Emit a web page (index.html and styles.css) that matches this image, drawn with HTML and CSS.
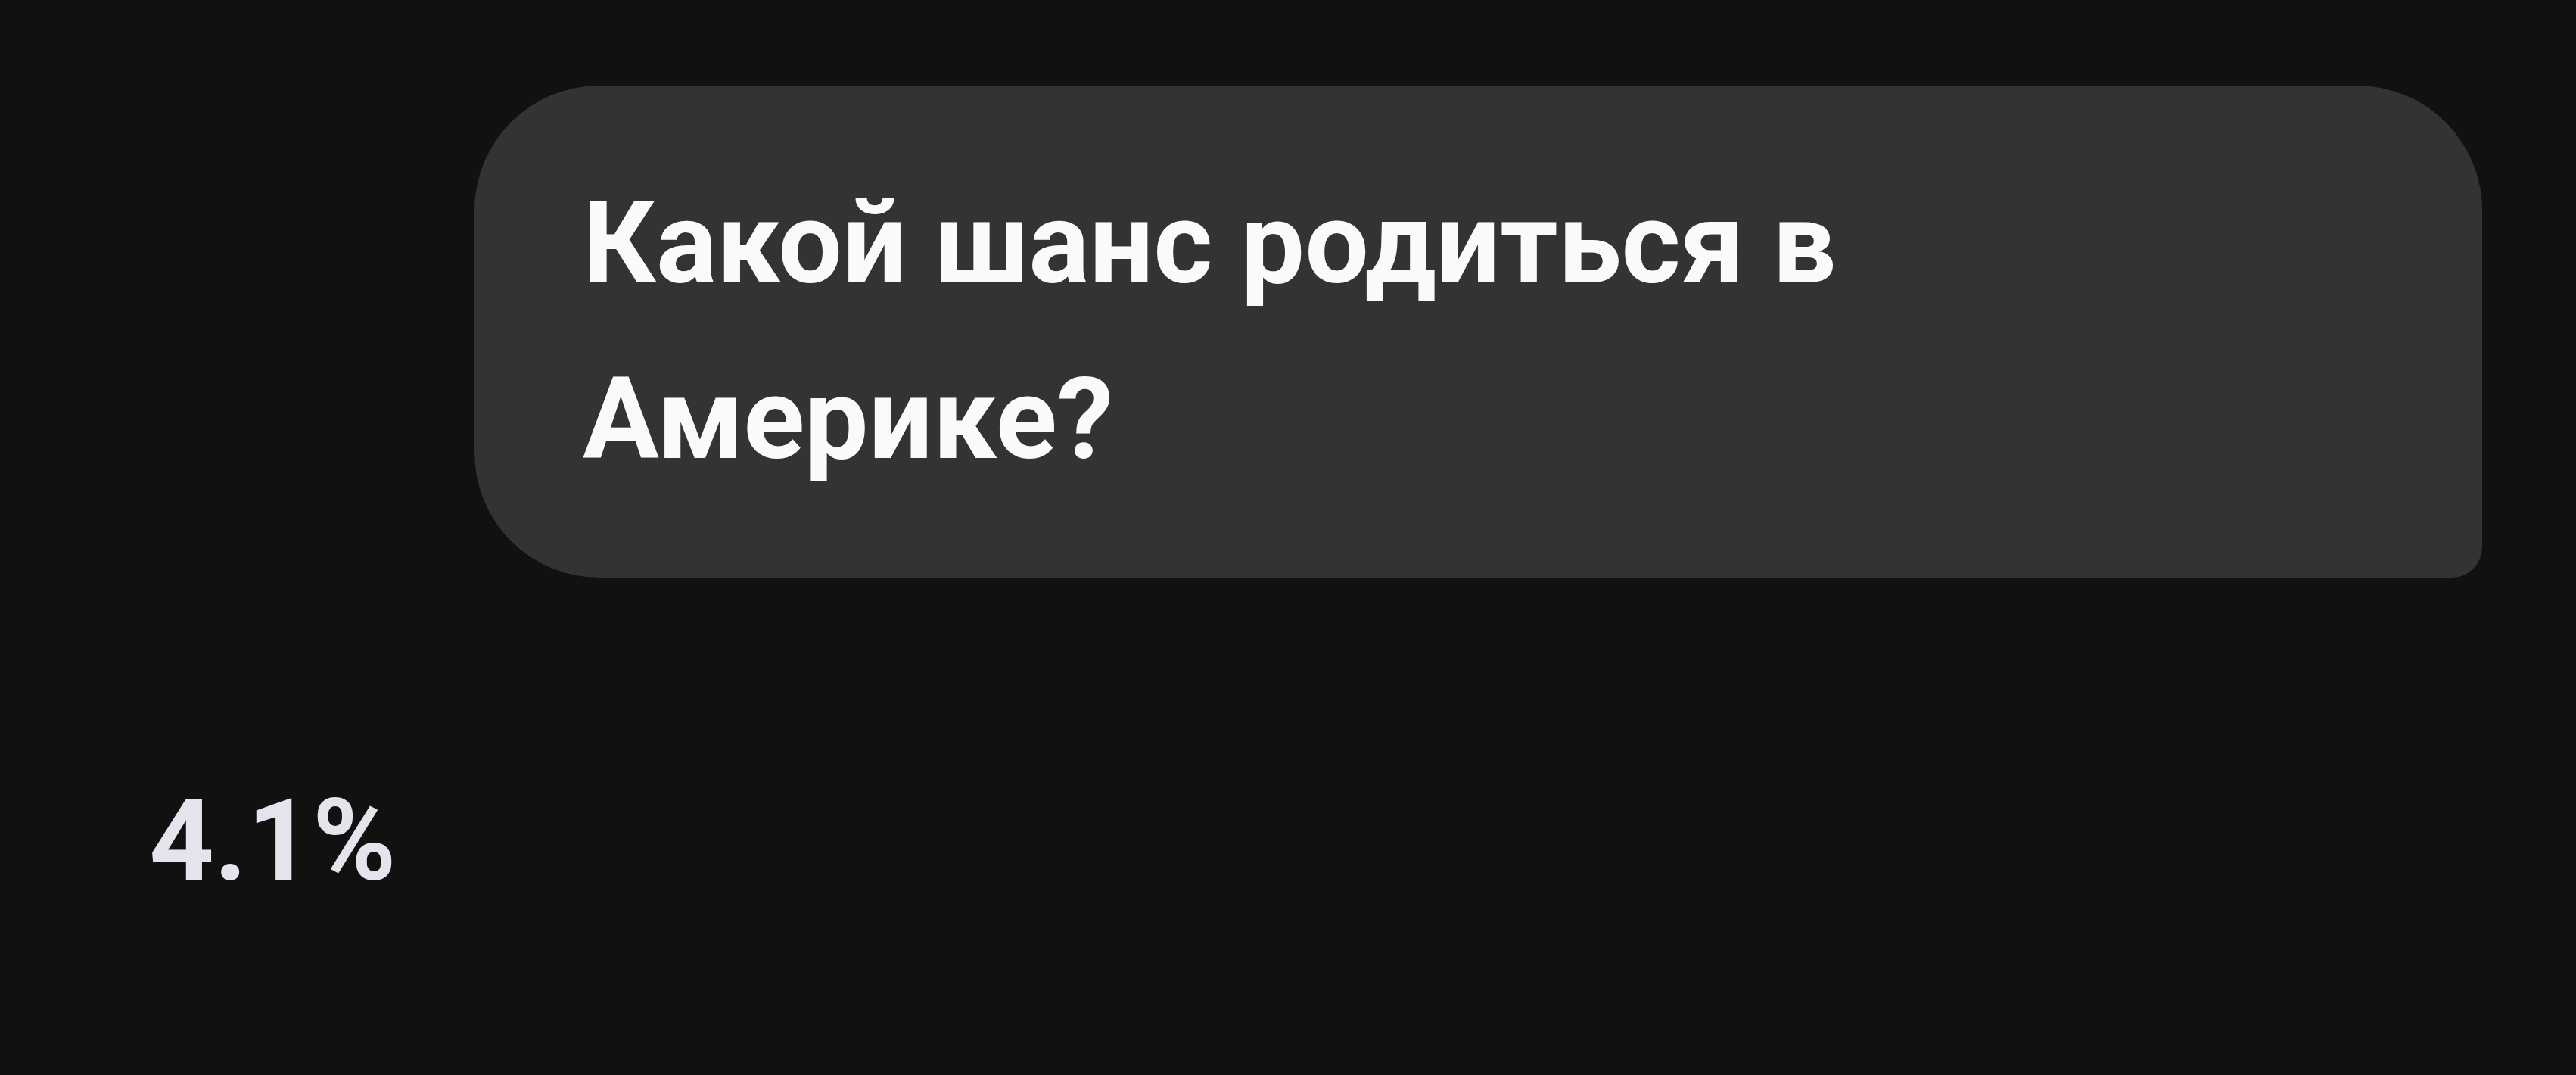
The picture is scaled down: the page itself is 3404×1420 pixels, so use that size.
FILE: index.html
```html
<!DOCTYPE html>
<html lang="ru">
<head>
	<meta charset="utf-8">
	<title>Чат</title>
	<link rel="stylesheet" href="styles.css">
</head>
<body>
	<div class="chat">
		<div class="bubble">
			<p class="question">Какой шанс родиться в Америке?</p>
		</div>
		<div class="answer">4.1%</div>
	</div>
</body>
</html>
```

FILE: styles.css
```css
body {
	margin: 0;
	background: #111111;
	font-family: Roboto, 'Noto Sans', sans-serif;
}
.chat {
	padding-top: 113px;
}
.bubble {
	margin: 0 124px 0 627px;
	height: 650px;
	box-sizing: border-box;
	padding: 93px 150px 93px 143px;
	background: #333333;
	border-radius: 165px 165px 40px 165px;
}
.question {
	margin: 0;
	max-width: 1750px;
	color: #fafafa;
	font-size: 150px;
	font-weight: 700;
	line-height: 232px;
}
.answer {
	margin-top: 258px;
	padding-left: 197px;
	color: #e4e4ec;
	font-size: 150px;
	font-weight: 700;
	line-height: 180px;
}
```
